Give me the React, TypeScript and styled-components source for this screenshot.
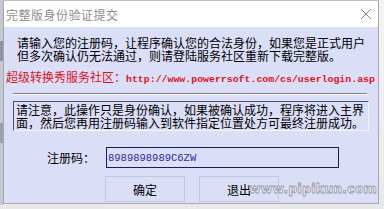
import React from "react";
import styled, { createGlobalStyle } from "styled-components";

const Global = createGlobalStyle`
  html, body { margin: 0; padding: 0; background: #f4f4f4; }
  body { width: 384px; height: 209px; overflow: hidden; }
`;

const cjk = `"Noto Sans CJK SC", "Noto Sans", sans-serif`;

const Screen = styled.div`
  width: 384px;
  height: 209px;
  display: flex;
  background: linear-gradient(#f4f4f4, #e8e8e8);
`;

const LeftStrip = styled.div`
  width: 3px;
  height: 205px;
  background: linear-gradient(#c4c8d0 0 20%, #8a95a8 20% 30%, #c4c8d0 30% 60%, #9aa0ae 60% 70%, #c4c8d0 70%);
`;

const Window = styled.div`
  position: relative;
  width: 376px;
  height: 204px;
  border: 1px solid #a8a8a8;
  border-top-color: #c0c0c0;
  box-sizing: border-box;
  display: flex;
  flex-direction: column;
  background: #dadef6;
`;

const TitleBar = styled.div`
  height: 26px;
  flex: none;
  background: #ffffff;
  display: flex;
  align-items: center;
  justify-content: space-between;
  padding: 0 6px 0 2px;
`;

const Title = styled.div`
  font-family: ${cjk};
  font-size: 12px;
  color: #8c8c8c;
  letter-spacing: 0.5px;
`;

const Body = styled.div`
  flex: 1;
  display: flex;
  flex-direction: column;
  padding: 9px 0 0 0;
`;

const Para = styled.div<{ $indent: number }>`
  font-family: ${cjk};
  font-size: 12px;
  line-height: 13px;
  color: #000;
  padding-left: ${(p) => p.$indent}px;
  white-space: nowrap;
`;

const RedLine = styled.div`
  margin-top: 9px;
  padding-left: 2px;
  display: flex;
  align-items: baseline;
  line-height: 12px;
  color: #e0101a;
  white-space: nowrap;
`;

const RedLabel = styled.span`
  font-family: ${cjk};
  font-size: 12px;
`;

const Url = styled.span`
  font-family: "Liberation Mono", monospace;
  font-size: 9.9px;
  font-weight: bold;
`;

const Separator = styled.div`
  margin: 7px 9px 0 9px;
  height: 0;
  border-top: 1px solid #7c7c8c;
  border-bottom: 1px solid #ffffff;
  width: 354px;
`;

const NoticeBox = styled.div`
  margin: 6px 0 0 9px;
  width: 356px;
  height: 30px;
  box-sizing: border-box;
  border: 1px solid #f4f4fc;
  border-top-color: #505060;
  border-left-color: #505060;
  padding: 1px 0 0 2px;
`;

const FormRow = styled.div`
  margin-top: 16px;
  display: flex;
  align-items: center;
`;

const Label = styled.div`
  width: 102px;
  box-sizing: border-box;
  padding-left: 43px;
  font-family: ${cjk};
  font-size: 12px;
  color: #000;
`;

const Input = styled.div`
  width: 233px;
  height: 21px;
  box-sizing: border-box;
  border: 1px solid #1c1c50;
  display: flex;
  align-items: center;
  padding-left: 1px;
  font-family: "Liberation Mono", monospace;
  font-size: 10.5px;
  color: #2a2aa0;
`;

const ButtonRow = styled.div`
  margin-top: 8px;
  padding-left: 101px;
  display: flex;
  gap: 14px;
`;

const Button = styled.div`
  width: 80px;
  height: 26px;
  box-sizing: border-box;
  border: 1px solid #c4c8dc;
  display: flex;
  align-items: center;
  justify-content: center;
  font-family: ${cjk};
  font-size: 12px;
  color: #000;
`;

const Watermark = styled.div`
  position: absolute;
  left: 245px;
  top: 180px;
  font-family: "DejaVu Sans", sans-serif;
  font-weight: bold;
  font-size: 12.5px;
  letter-spacing: 0.2px;
  color: #eceef6;
  -webkit-text-stroke: 0.8px #9a9aa6;
`;

const Close = () => (
  <svg width="12" height="12" viewBox="0 0 12 12">
    <path d="M1 1 L11 11 M11 1 L1 11" stroke="#8a8a8a" strokeWidth="1" fill="none" />
  </svg>
);

export default function App() {
  return (
    <>
      <Global />
      <Screen>
        <LeftStrip />
        <Window>
          <TitleBar>
            <Title>完整版身份验证提交</Title>
            <Close />
          </TitleBar>
          <Body>
            <Para $indent={13}>请输入您的注册码，让程序确认您的合法身份，如果您是正式用户</Para>
            <Para $indent={13}>但多次确认仍无法通过，则请登陆服务社区重新下载完整版。</Para>
            <RedLine>
              <RedLabel>超级转换秀服务社区：</RedLabel>
              <Url>http://www.powerrsoft.com/cs/userlogin.asp</Url>
            </RedLine>
            <Separator />
            <NoticeBox>
              <Para $indent={0}>请注意，此操作只是身份确认，如果被确认成功，程序将进入主界</Para>
              <Para $indent={0}>面，然后您再用注册码输入到软件指定位置处方可最终注册成功。</Para>
            </NoticeBox>
            <FormRow>
              <Label>注册码：</Label>
              <Input>8989898989C6ZW</Input>
            </FormRow>
            <ButtonRow>
              <Button>确定</Button>
              <Button>退出</Button>
            </ButtonRow>
          </Body>
          <Watermark>www.pipikun.com</Watermark>
        </Window>
      </Screen>
    </>
  );
}
